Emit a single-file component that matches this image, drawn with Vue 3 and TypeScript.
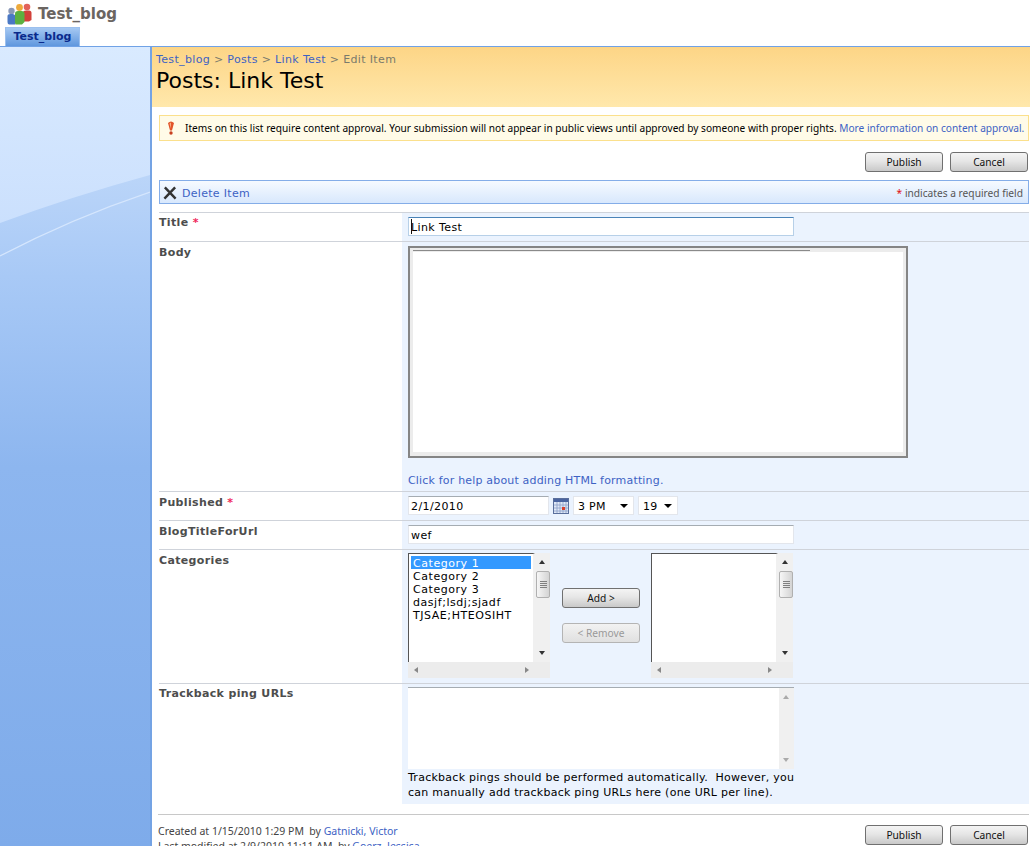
<script setup lang="ts">
type FieldRow = { label: string; required: boolean; kind: string }

const crumbs: string[] = ['Test_blog', 'Posts', 'Link Test']
const categories: string[] = ['Category 1', 'Category 2', 'Category 3', 'dasjf;lsdj;sjadf', 'TJSAE;HTEOSIHT']

const rows: FieldRow[] = [
    { label: 'Title', required: true, kind: 'title' },
    { label: 'Body', required: false, kind: 'body' },
    { label: 'Published', required: true, kind: 'published' },
    { label: 'BlogTitleForUrl', required: false, kind: 'url' },
    { label: 'Categories', required: false, kind: 'categories' },
    { label: 'Trackback ping URLs', required: false, kind: 'trackback' }
]
</script>

<template>
    <div class="page">
        <header class="top">
            <div class="brand">
                <svg class="logo" width="25" height="22" viewBox="0 0 25 22">
                    <circle cx="4.500" cy="8" r="3.200" fill="#8a98b8" />
                    <path d="M0.500 13 Q0.500 11 3.500 11 L6 11 Q8.500 11.500 8.500 14 L8.500 21.500 L2 21.500 Q0.500 21 0.500 19 Z" fill="#4a78c4" />
                    <circle cx="20" cy="4" r="3.300" fill="#e2625a" />
                    <path d="M16 9.500 Q16 7.500 19 7.500 L22 7.500 Q24.500 7.500 24.500 10 L24.500 17 L22 18.500 L16 18.500 Z" fill="#d2403a" />
                    <circle cx="12.500" cy="4.500" r="3.400" fill="#eeaa3c" />
                    <path d="M8 10.500 Q8 8 11 8 L14.500 8 Q17.500 8 17.500 10.500 L17.500 19 L15 21.500 L9 21.500 Q8 21 8 19.500 Z" fill="#5cb040" />
                </svg>
                <span class="site-title">Test_blog</span>
            </div>
            <div class="tab">Test_blog</div>
        </header>

        <div class="body-wrap">
            <aside class="side">
                <svg class="swoosh" width="150" height="210" viewBox="0 0 150 210">
                    <defs>
                        <linearGradient id="sideTop" x1="0" y1="0" x2="0" y2="1">
                            <stop offset="0" stop-color="#d9eaff" />
                            <stop offset="1" stop-color="#cbe0fd" />
                        </linearGradient>
                    </defs>
                    <path d="M0 0 H150 V128 Q70 150 0 176 Z" fill="url(#sideTop)" />
                    <path d="M0 209 Q70 172 150 145" fill="none" stroke="#d5e6fd" stroke-width="1.200" />
                </svg>
            </aside>

            <main class="main">
                <div class="title-area">
                    <div class="crumbs">
                        <template v-for="c in crumbs" :key="c">
                            <a class="link">{{ c }}</a><span class="sep"> &gt; </span>
                        </template>
                        <span>Edit Item</span>
                    </div>
                    <h1>Posts: Link Test</h1>
                </div>

                <div class="content">
                    <div class="notice">
                        <svg class="bang" width="10" height="15" viewBox="0 0 10 15">
                            <path d="M2 2 Q5 -1 8 2 L6 9.500 L4 9.500 Z" fill="#e2542a" />
                            <path d="M3.500 2.500 L5 1.500 L4.800 7.500 Z" fill="#f6b48a" />
                            <circle cx="5" cy="12" r="1.700" fill="#c8401f" />
                        </svg>
                        <span>Items on this list require content approval. Your submission will not appear in public views until approved by someone with proper rights. <a class="link">More information on content approval.</a></span>
                    </div>

                    <div class="actions">
                        <button class="btn">Publish</button>
                        <button class="btn">Cancel</button>
                    </div>

                    <div class="toolbar">
                        <a class="delete">
                            <svg width="14" height="14" viewBox="0 0 15 15">
                                <path d="M2 1.500 L13.500 13.500 M13 1.500 L1.500 13.500" stroke="#333" stroke-width="2.600" />
                            </svg>
                            <span class="link delete-text">Delete Item</span>
                        </a>
                        <span class="req-note"><i>*</i> indicates a required field</span>
                    </div>

                    <div class="form">
                        <div v-for="row in rows" :key="row.label" class="row" :class="'row-' + row.kind">
                            <div class="label">{{ row.label }}<i v-if="row.required"> *</i></div>
                            <div class="field">
                                <div v-if="row.kind === 'title'" class="input wide focused"><span class="caret"></span>Link Test</div>

                                <template v-else-if="row.kind === 'body'">
                                    <div class="editor">
                                        <div class="editor-line"></div>
                                        <div class="editor-inner"></div>
                                    </div>
                                    <a class="link help">Click for help about adding HTML formatting.</a>
                                </template>

                                <div v-else-if="row.kind === 'published'" class="date-row">
                                    <div class="input date">2/1/2010</div>
                                    <svg class="cal" width="16" height="16" viewBox="0 0 16 16">
                                        <rect x="0.500" y="0.500" width="15" height="15" fill="#dfe8f6" stroke="#5a6f9c" />
                                        <rect x="1" y="1" width="14" height="3" fill="#4a64a0" />
                                        <path d="M1 7H15M1 10H15M1 13H15M4 4V15M7 4V15M10 4V15M13 4V15" stroke="#8ba0c8" stroke-width="0.800" />
                                        <rect x="9" y="9" width="3" height="3" fill="#d8402c" />
                                    </svg>
                                    <div class="select hour"><span>3 PM</span><b></b></div>
                                    <div class="select minute"><span>19</span><b></b></div>
                                </div>

                                <div v-else-if="row.kind === 'url'" class="input wide">wef</div>

                                <div v-else-if="row.kind === 'categories'" class="picker">
                                    <div class="listbox">
                                        <div class="list">
                                            <div v-for="(c, i) in categories" :key="c" class="option" :class="{ selected: i === 0 }">{{ c }}</div>
                                        </div>
                                        <div class="vbar"><u class="up"></u><s class="thumb"></s><u class="down"></u></div>
                                        <div class="hbar"><u class="left"></u><u class="right"></u></div>
                                        <div class="corner"></div>
                                    </div>
                                    <div class="picker-btns">
                                        <button class="btn">Add &gt;</button>
                                        <button class="btn off">&lt; Remove</button>
                                    </div>
                                    <div class="listbox">
                                        <div class="list"></div>
                                        <div class="vbar"><u class="up"></u><s class="thumb"></s><u class="down"></u></div>
                                        <div class="hbar"><u class="left"></u><u class="right"></u></div>
                                        <div class="corner"></div>
                                    </div>
                                </div>

                                <template v-else>
                                    <div class="ping-box">
                                        <div class="ping-text"></div>
                                        <div class="vbar pale"><u class="up"></u><u class="down"></u></div>
                                    </div>
                                    <p class="hint">Trackback pings should be performed automatically.&nbsp; However, you can manually add trackback ping URLs here (one URL per line).</p>
                                </template>
                            </div>
                        </div>
                    </div>

                    <div class="footer">
                        <div class="meta">
                            <div>Created at 1/15/2010 1:29 PM&nbsp; by <a class="link">Gatnicki, Victor</a></div>
                            <div>Last modified at 2/9/2010 11:11 AM&nbsp; by <a class="link">Goerz, Jessica</a></div>
                        </div>
                        <div class="actions foot">
                            <button class="btn">Publish</button>
                            <button class="btn">Cancel</button>
                        </div>
                    </div>
                </div>
            </main>
        </div>
    </div>
</template>

<style>
html, body {
    margin: 0;
    overflow: hidden;
    background: #fff;
}
</style>

<style scoped>
.page {
    width: 1030px;
    height: 846px;
    overflow: hidden;
    font-family: "DejaVu Sans", Verdana, sans-serif;
    font-size: 11px;
    color: #000;
}

.top {
    height: 46px;
    padding-left: 5px;
    box-sizing: border-box;
    display: flex;
    flex-direction: column;
    justify-content: space-between;
}

.brand {
    display: flex;
    align-items: center;
    gap: 6px;
    height: 25px;
    padding: 1px 0 0 2px;
}

.site-title {
    font-size: 15px;
    font-weight: bold;
    color: #6b6561;
}

.tab {
    width: 75px;
    height: 19px;
    box-sizing: border-box;
    border: 1px solid #9cc0ee;
    border-bottom: none;
    background: linear-gradient(#a5c8f2, #5f97de);
    color: #0a2a8c;
    font-weight: bold;
    font-size: 11px;
    line-height: 18px;
    text-align: center;
}

.body-wrap {
    display: flex;
    height: 800px;
    border-top: 1px solid #70a2e6;
}

.side {
    width: 150px;
    flex: none;
    background: linear-gradient(#bcd6f9 120px, #a8c9f6 230px, #8db6ef 420px, #7eabea 100%);
    position: relative;
    overflow: hidden;
}

.swoosh {
    position: absolute;
    left: 0;
    top: 0;
}

.main {
    flex: 1;
    min-width: 0;
    border-left: 2px solid #74a3e4;
}

.title-area {
    height: 60px;
    box-sizing: border-box;
    padding: 6px 0 0 4px;
    background: linear-gradient(#fdd586, #ffe8ac);
}

.crumbs {
    font-size: 11px;
    line-height: 14px;
    letter-spacing: 0.35px;
    color: #7a7a6c;
}

.sep {
    white-space: pre;
}

.link {
    color: #3d62c4;
    text-decoration: none;
}

h1 {
    margin: 0;
    font-size: 22px;
    font-weight: normal;
    line-height: 28px;
}

.content {
    padding: 8px 1px 0 7px;
}

.notice {
    height: 26px;
    box-sizing: border-box;
    border: 1px solid #fbe08c;
    background: #fffbe8;
    display: flex;
    align-items: center;
    gap: 9px;
    padding-left: 6px;
    font-family: "Noto Sans", Tahoma, sans-serif;
    font-size: 10.15px;
    white-space: nowrap;
}

.bang {
    flex: none;
}

.actions {
    display: flex;
    justify-content: flex-end;
    gap: 7px;
    padding: 11px 1px 0 0;
}

.btn {
    width: 78px;
    height: 20px;
    padding: 0;
    border: 1px solid #707070;
    border-radius: 3px;
    background: linear-gradient(#f4f4f4, #e6e6e6 45%, #c9c9c9);
    font-family: "Noto Sans", Tahoma, sans-serif;
    font-size: 10.2px;
    color: #111;
}

.btn.off {
    border-color: #b4b4b4;
    background: linear-gradient(#f2f2f2, #e0e0e0);
    color: #999;
}

.toolbar {
    margin-top: 8px;
    height: 24px;
    box-sizing: border-box;
    border: 1px solid #84ade8;
    background: linear-gradient(#f6faff, #d8e8fd);
    display: flex;
    align-items: center;
    justify-content: space-between;
    padding: 1px 5px 0 3px;
}

.delete {
    display: flex;
    align-items: center;
    gap: 5px;
    letter-spacing: 0.3px;
}

.delete-text {
    padding-top: 2px;
}

.req-note {
    font-family: "Noto Sans", Tahoma, sans-serif;
    font-size: 10.2px;
    color: #555;
}

i {
    font-style: normal;
    color: #f0285a;
}

.req-note i {
    color: #e01010;
}

.form {
    margin-top: 8px;
}

.row {
    display: grid;
    grid-template-columns: 243px 1fr;
    border-top: 1px solid #cfd3da;
    box-sizing: border-box;
}

.row-title, .row-published, .row-url {
    height: 29px;
}

.row-body {
    height: 250px;
}

.row-categories {
    height: 134px;
}

.row-trackback {
    height: 121px;
}

.label {
    padding-top: 4px;
    font-weight: bold;
    font-size: 11px;
    line-height: 14px;
    letter-spacing: 0.35px;
    color: #4d4d4d;
}

.row-title .label, .row-trackback .label {
    padding-top: 3px;
}

.field {
    background: #ebf3fe;
    padding: 4px 0 0 6px;
}

.input {
    height: 19px;
    box-sizing: border-box;
    border: 1px solid #e3e6ec;
    border-top-color: #a5acb2;
    background: #fff;
    padding-left: 2px;
    font-size: 11px;
    line-height: 20px;
    letter-spacing: 0.4px;
}

.wide {
    width: 386px;
}

.focused {
    border-color: #b7d0e8;
    border-top-color: #4b84b8;
    position: relative;
}

.caret {
    position: absolute;
    left: 2px;
    top: 1px;
    width: 1px;
    height: 15px;
    background: #111;
}

.editor {
    width: 500px;
    height: 212px;
    box-sizing: border-box;
    border: 2px solid #858585;
    background: #ececec;
    padding: 0 3px;
}

.editor-line {
    width: 397px;
    height: 1px;
    margin-top: 2px;
    background: #8a8a8a;
}

.editor-inner {
    height: 200px;
    margin-top: 1px;
    background: #fff;
}

.help {
    display: block;
    margin-top: 16px;
    line-height: 14px;
    letter-spacing: 0.18px;
}

.date-row {
    display: flex;
    align-items: center;
    gap: 4px;
}

.date {
    width: 141px;
}

.cal {
    flex: none;
}

.select {
    height: 19px;
    box-sizing: border-box;
    border: 1px solid #e3e6ec;
    background: #fff;
    display: flex;
    align-items: center;
    justify-content: space-between;
    padding: 0 5px 0 4px;
    letter-spacing: 0.3px;
}

.select span {
    padding-top: 2px;
}

.select b {
    width: 0;
    height: 0;
    border: 4px solid transparent;
    border-top: 4px solid #000;
    border-bottom: none;
}

.hour {
    width: 61px;
}

.minute {
    width: 40px;
}

.picker {
    display: flex;
    margin-top: -1px;
}

.listbox {
    width: 142px;
    height: 125px;
    display: grid;
    grid-template-columns: 127px 15px;
    grid-template-rows: 109px 16px;
}

.list {
    background: #fff;
    border-left: 1px solid #555;
    border-top: 1px solid #555;
    border-right: 2px solid #f0f0f0;
    padding: 2px 0 0 2px;
    box-sizing: border-box;
    letter-spacing: 0.55px;
}

.option {
    width: 120px;
    height: 13px;
    line-height: 15px;
    padding-left: 2px;
    box-sizing: border-box;
    white-space: nowrap;
}

.selected {
    background: #3399ff;
    color: #fff;
}

.vbar {
    background: #f0f0f0;
    position: relative;
}

.hbar {
    background: #ececec;
    position: relative;
}

.corner {
    background: #ececec;
}

u {
    position: absolute;
    width: 0;
    height: 0;
    border: 3px solid transparent;
}

.up {
    left: 4px;
    top: 7px;
    border-bottom: 4px solid #333;
    border-top: none;
}

.down {
    left: 4px;
    bottom: 7px;
    border-top: 4px solid #333;
    border-bottom: none;
}

.left {
    left: 6px;
    top: 5px;
    border-right: 4px solid #888;
    border-left: none;
}

.right {
    right: 6px;
    top: 5px;
    border-left: 4px solid #888;
    border-right: none;
}

.thumb {
    position: absolute;
    left: 1px;
    top: 18px;
    width: 14px;
    height: 27px;
    box-sizing: border-box;
    border: 1px solid #b0b0b0;
    border-radius: 2px;
    background: repeating-linear-gradient(#808080 0 1px, transparent 1px 2px) center / 7px 7px no-repeat, linear-gradient(90deg, #f6f6f6, #d4d4d4);
}

.picker-btns {
    width: 101px;
    padding-top: 35px;
    box-sizing: border-box;
    display: flex;
    flex-direction: column;
    gap: 15px;
    padding-left: 12px;
}

.ping-box {
    width: 386px;
    height: 82px;
    display: flex;
    margin-top: -1px;
    border-top: 1px solid #a5acb2;
    box-sizing: border-box;
}

.ping-text {
    flex: 1;
    background: #fff;
}

.vbar.pale {
    width: 15px;
}

.pale u {
    border-top-color: #aaa;
    border-bottom-color: #aaa;
}

.hint {
    margin: 1px 0 0;
    width: 392px;
    font-size: 11px;
    letter-spacing: 0.26px;
    line-height: 15px;
}

.footer {
    margin-top: 10px;
    margin-left: -1px;
    border-top: 1px solid #c8c8c8;
    display: flex;
    justify-content: space-between;
}

.meta {
    padding-top: 9px;
    font-family: "Noto Sans", Tahoma, sans-serif;
    font-size: 10.5px;
    line-height: 15px;
    color: #444;
    white-space: nowrap;
}

.foot {
    padding-top: 10px;
}
</style>
